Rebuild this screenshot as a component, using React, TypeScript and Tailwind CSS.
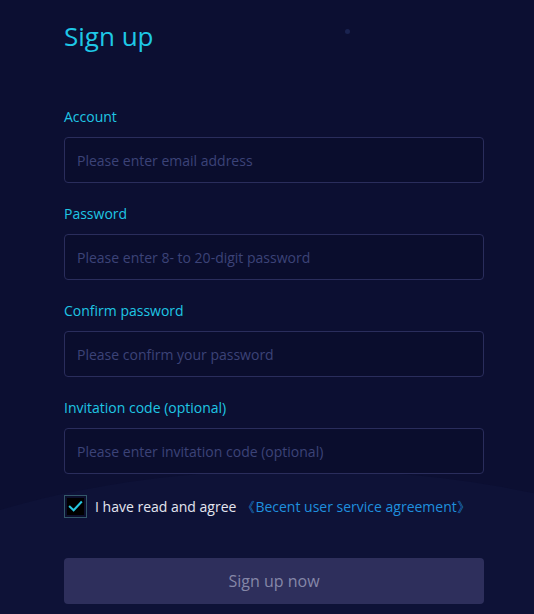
import React from "react";

const fields = [
  { label: "Account", placeholder: "Please enter email address" },
  { label: "Password", placeholder: "Please enter 8- to 20-digit password" },
  { label: "Confirm password", placeholder: "Please confirm your password" },
  { label: "Invitation code (optional)", placeholder: "Please enter invitation code (optional)" },
];

export default function App() {
  return (
    <div className="relative min-h-[614px] w-full overflow-hidden bg-[#0c0f32] font-['Open_Sans',sans-serif]">
      {/* faint background wave */}
      <div className="pointer-events-none absolute left-[-200px] top-[470px] h-[400px] w-[1000px] rounded-[50%] bg-[#0e1237]" />
      <div className="pointer-events-none absolute left-[345px] top-[29px] h-[5px] w-[5px] rounded-full bg-[#1a2350]" />

      <div className="relative ml-[64px] w-[420px] pt-[18px]">
        <h1 className="text-[26px] leading-[36px] text-[#1ec8e6]">Sign up</h1>

        <div className="mt-[53px] flex flex-col gap-[21px]">
          {fields.map((f) => (
            <div key={f.label}>
              <label className="block text-[14px] leading-[20px] text-[#1fc6e4]">{f.label}</label>
              <input
                type="text"
                placeholder={f.placeholder}
                className="mt-[10px] block h-[46px] w-full rounded-[4px] border border-[#2a2d5c] bg-[#0a0d2d] px-[12px] text-[14px] text-white outline-none placeholder:text-[#3c4378]"
              />
            </div>
          ))}
        </div>

        <div className="mt-[21px] flex items-center">
          <span className="flex h-[23px] w-[23px] items-center justify-center border border-[#33586a] bg-[#0b0e2c]">
            <span className="flex h-[17px] w-[17px] items-center justify-center bg-black">
              <svg viewBox="0 0 16 16" className="h-[15px] w-[15px]" fill="none">
                <path d="M2 8.2 6 12 14 3.5" stroke="#28c8e0" strokeWidth="2.2" strokeLinecap="square" />
              </svg>
            </span>
          </span>
          <span className="ml-[8px] text-[14px] leading-[20px] text-[#e4e6f0]">I have read and agree</span>
          <span className="ml-[5px] text-[14px] leading-[20px] text-[#1f8fde]">《Becent user service agreement》</span>
        </div>

        <button className="mt-[40px] block h-[46px] w-full rounded-[4px] bg-[#2e2f5c] text-[16px] text-[#8587a8]">
          Sign up now
        </button>
      </div>
    </div>
  );
}
